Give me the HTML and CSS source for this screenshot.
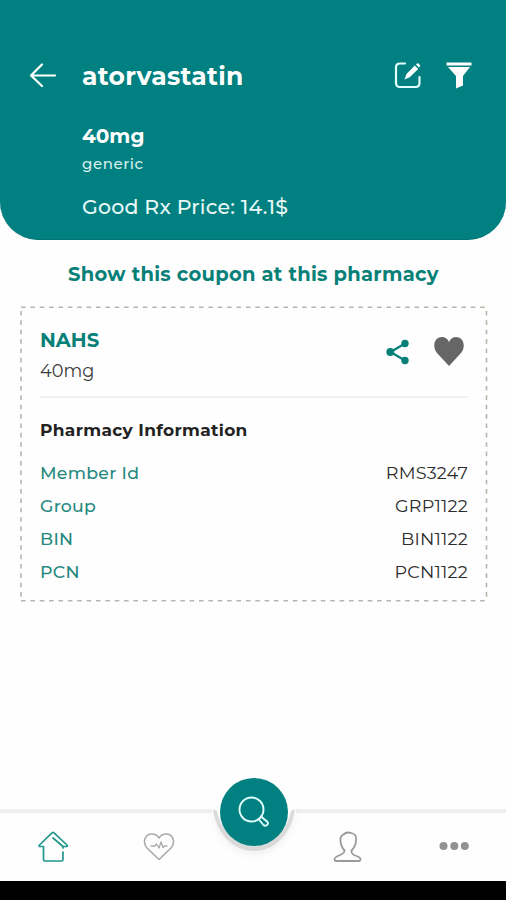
FILE: index.html
```html
<!DOCTYPE html>
<html lang="en">
<head>
<meta charset="utf-8">
<meta name="viewport" content="width=device-width, initial-scale=1">
<title>atorvastatin</title>
<link rel="stylesheet" href="styles.css">
</head>
<body>
<div class="screen">
  <header class="header">
    <div class="toolbar">
      <svg class="back" width="28" height="28" viewBox="0 0 28 28"><path d="M26 13.500H2M13 2.500L2 13.500l11 10.500"/></svg>
      <h1 class="title">atorvastatin</h1>
      <svg class="edit" width="28" height="28" viewBox="0 0 28 28"><path class="line" d="M11 1.500H6Q2 1.500 2 5.500V21Q2 25 6 25H21.500Q25.500 25 25.500 21V15"/><path class="solid" d="M10.500 17.500l2-5.500L20.800 3.500l3.400 3.400-8.500 8.400zM22 2.500l1-1q.7-.6 1.400 0l1.500 1.500q.6.700 0 1.400l-1 1z"/></svg>
      <svg class="filter" width="26" height="28" viewBox="0 0 26 28"><path d="M.5.5h25v3H.5zM2 5h22L17 14v9.500L10 26.500V14z"/></svg>
    </div>
    <div class="drug">
      <p class="strength">40mg</p>
      <p class="kind">generic</p>
      <p class="price">Good Rx Price: 14.1$</p>
    </div>
  </header>

  <main class="content">
    <h2 class="prompt">Show this coupon at this pharmacy</h2>
    <section class="coupon">
      <svg class="outline" width="468" height="296" viewBox="0 0 468 296"><path d="M1 1.200H467M1 294.700H467M1 5V294M466.500 5V294"/></svg>
      <div class="summary">
        <div class="plan">
          <p class="plan-name">NAHS</p>
          <p class="plan-dose">40mg</p>
        </div>
        <svg class="share" width="24" height="26" viewBox="0 0 24 26"><path d="M19 4.500L4.500 13 19 21.500"/><circle cx="19" cy="4.500" r="3.700"/><circle cx="4.300" cy="13" r="3.900"/><circle cx="19" cy="21.500" r="3.700"/></svg>
        <svg class="heart" width="32" height="31" viewBox="0 0 32 31"><path d="M16 30L4 17C-1 11 1 1 9 1c3 0 5.500 1.500 7 5 1.500-3.500 4-5 7-5 8 0 10 10 5 16z"/></svg>
      </div>
      <h3 class="heading">Pharmacy Information</h3>
      <dl class="details">
        <div class="row"><dt>Member Id</dt><dd>RMS3247</dd></div>
        <div class="row"><dt>Group</dt><dd>GRP1122</dd></div>
        <div class="row"><dt>BIN</dt><dd>BIN1122</dd></div>
        <div class="row"><dt>PCN</dt><dd>PCN1122</dd></div>
      </dl>
    </section>
  </main>

  <nav class="tabs">
    <svg class="home" width="32" height="34" viewBox="0 0 32 34"><path d="M5.500 17V29.500Q5.500 31 7 31H23.500Q25 31 25 29.500V22M25 18V16.500H28.500Q30 16 29 15L16 2.800Q15 2 14 2.800L1.500 15Q.5 16.500 2 16.500H5.500M15 8L25 16.500"/></svg>
    <svg class="health" width="32" height="30" viewBox="0 0 32 30"><path d="M16 27.500L4 16C-1 10 2 2 9 2q4.500 0 7 4 2.500-4 7-4c7 0 10 8 5 14z"/><path d="M8 14h4l1.500-2 2.500 4 2-6 2 5.500 1.500-1.500H24"/></svg>
    <div class="search">
      <svg class="search-ring" width="84" height="86" viewBox="0 0 84 86"><path d="M1 34C4 57 20 76 42 76S80 57 83 34L79 36C76 54 61 71 42 71S8 54 5 36z"/></svg>
      <div class="search-button"><svg width="34" height="34" viewBox="0 0 34 34"><circle cx="14.500" cy="14.500" r="12"/><path d="M21.500 24l5 6q1.500 1.500 3.500 0t0-3.500l-6-5"/></svg></div>
    </div>
    <svg class="profile" width="30" height="34" viewBox="0 0 30 34"><path d="M11.500 20.500Q7.500 16 7.500 10.500 7 6 10.500 4.500 13.500 1.500 18.500 3q5.500 1.500 4.500 7 0 6-4.500 10.500-.5 3 3.500 5 5.500 1.500 5.500 4 0 1.500-1.500 1.500H3q-1.500 0-1.500-1.500 0-2.500 5.500-4.500 5-2 4.500-5z"/></svg>
    <svg class="more" width="30" height="10" viewBox="0 0 30 10"><circle cx="4.500" cy="5" r="4"/><circle cx="15.300" cy="5" r="4"/><circle cx="25.800" cy="5" r="4"/></svg>
  </nav>
  <div class="system-bar"></div>
</div>
</body>
</html>
```

FILE: styles.css
```css
* { box-sizing: border-box; }
body, h1, h2, h3, p, dl, dd { margin: 0; }
body { background: #fff; font-family: Montserrat, Inter, "Open Sans", sans-serif; white-space: nowrap; }
svg { display: block; flex: none; fill: none; stroke-linecap: round; stroke-linejoin: round; }
.screen { width: 506px; height: 900px; display: flex; flex-direction: column; overflow: hidden; background: #fefefe; }

.header { flex: none; height: 240px; padding: 60px 34px 0 29px; background: #008080; border-bottom: 1px solid #007373; border-radius: 0 0 38px 38px; color: #fff; }
.toolbar { display: flex; align-items: center; height: 32px; }
.back { stroke: #fff; stroke-width: 2.200; }
.title { margin-left: 25px; font-size: 25px; line-height: 32px; font-weight: 700; letter-spacing: 0.300px; }
.edit { margin-left: auto; }
.edit .line { stroke: #e4ffff; stroke-width: 2.200; }
.edit .solid { fill: #fff; }
.filter { margin-left: 24px; fill: #fff; }
.drug { padding: 30px 0 0 53px; }
.strength { font-size: 20px; line-height: 28px; font-weight: 700; }
.kind { font-size: 15px; line-height: 28px; font-weight: 500; letter-spacing: 0.550px; color: #d7f0ef; }
.price { margin-top: 15px; font-size: 20.500px; line-height: 28px; font-weight: 500; letter-spacing: 0.200px; color: #e8f8f7; }

.content { flex: 1; padding: 20px 18px 0 20px; }
.prompt { height: 28px; padding-left: 48px; font-size: 19.500px; line-height: 28px; font-weight: 700; letter-spacing: 0.280px; color: #078078; }
.coupon { position: relative; width: 468px; height: 296px; margin-top: 18px; padding: 20px 20px 0; }
.outline { position: absolute; inset: 0; stroke: #b9b5ab; stroke-width: 1.600; stroke-dasharray: 4.600 4.770; stroke-linecap: butt; }
.summary { display: flex; height: 72px; border-bottom: 2px solid #edf2f2; }
.plan { flex: 1; }
.plan-name { font-size: 19.600px; line-height: 29px; font-weight: 700; color: #078078; }
.plan-dose { font-size: 17.700px; line-height: 32px; color: #3c3c3c; }
.share { margin: 13px 23px 0 0; fill: #078078; stroke: #078078; }
.share path { fill: none; stroke-width: 2.200; }
.share circle { stroke: none; }
.heart { margin: 10px 3px 0 0; fill: #666; }
.heading { margin-top: 18px; font-size: 17px; line-height: 28px; font-weight: 700; letter-spacing: 0.320px; color: #222; }
.details { margin-top: 12px; }
.row { display: flex; align-items: baseline; justify-content: space-between; height: 33px; font-size: 17.300px; line-height: 33px; }
.row dt { color: #27897f; font-weight: 500; letter-spacing: 0.300px; }
.row dd { color: #2c2c2c; font-size: 17.600px; font-weight: 450; letter-spacing: 0.200px; }

.tabs { position: relative; flex: none; height: 72px; display: flex; align-items: flex-start; border-top: 4px solid #eee; background: #fefefe; }
.home { margin: 17px 0 0 38px; stroke: #20978c; stroke-width: 1.700; }
.health { margin: 19px 0 0 73px; stroke: #aaa; stroke-width: 1.600; }
.health path + path { stroke-width: 1.300; }
.search { position: absolute; left: 212px; top: -38px; width: 84px; height: 86px; background: #fefefe; border-radius: 0 0 42px 42px; }
.search-ring { position: absolute; inset: 0; overflow: visible; fill: #dadada; filter: drop-shadow(0 3px 3px #0001); }
.search-button { position: absolute; left: 8px; top: 3px; width: 68px; height: 68px; border-radius: 50%; display: grid; place-items: center; background: #008080; }
.search-button svg { stroke: #e4ffff; stroke-width: 1.900; }
.profile { margin: 17px 0 0 158px; stroke: #999; stroke-width: 1.800; }
.more { margin: 28px 0 0 76px; fill: #929292; }
.system-bar { flex: none; height: 19px; background: #000; }
```
